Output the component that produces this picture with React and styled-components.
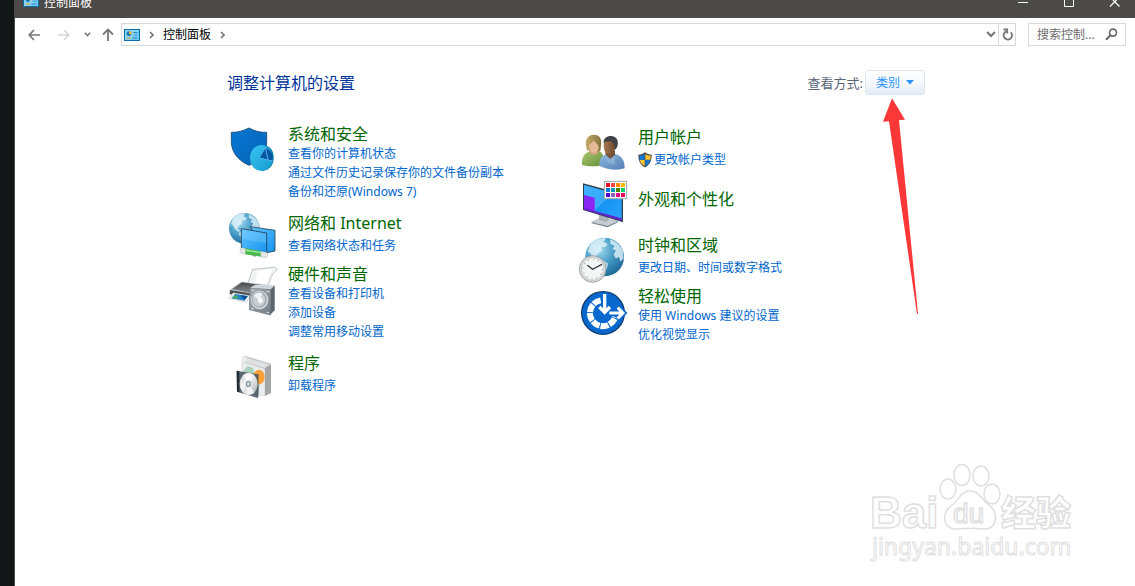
import React from 'react';
import styled, { createGlobalStyle } from 'styled-components';

const App = () => {
  return (
    <Desktop>
      <GlobalStyle />
      <WindowEl>
        <TitleBar>
          <PanelIcon />
          <TitleText>控制面板</TitleText>
          <WindowControls />
        </TitleBar>
        <Toolbar />
        <Main>
          <Content>
            <HeaderRow>
              <PageTitle>调整计算机的设置</PageTitle>
              <ViewLabel htmlFor='view-by'>查看方式:</ViewLabel>
              <ViewBy />
            </HeaderRow>
            <Columns>
              {columns.map((items, index) => (
                <Column key={index}>
                  {items.map(item => (
                    <Category key={item.title} {...item} />
                  ))}
                </Column>
              ))}
            </Columns>
          </Content>
        </Main>
      </WindowEl>
      <Watermark />
    </Desktop>
  );
};

const Category = ({ title, icon: Icon, links, shield }) => (
  <CategoryEl $long={links.length > 1}>
    <Icon />
    <CategoryText $links={links.length}>
      <CategoryTitle href='#'>{title}</CategoryTitle>
      {links.map(link => (
        <TaskLink key={link} href='#'>
          {shield && <ShieldBadge />}
          {link}
        </TaskLink>
      ))}
    </CategoryText>
  </CategoryEl>
);

const WindowControls = () => (
  <ControlsEl>
    <PlainButton aria-label='最小化'>
      <svg width='11' height='11' stroke='#fff'>
        <path d='M1 6.5h10' />
      </svg>
    </PlainButton>
    <PlainButton aria-label='最大化'>
      <svg width='11' height='11' stroke='#fff' fill='none'>
        <path d='M1.5 1.5h9v9h-9z' />
      </svg>
    </PlainButton>
    <PlainButton aria-label='关闭'>
      <svg width='11' height='11' stroke='#fff' strokeWidth='1.2'>
        <path d='M1 1l9.500 9.500M10.500 1L1 10.500' />
      </svg>
    </PlainButton>
  </ControlsEl>
);

const Toolbar = () => (
  <ToolbarEl>
    <NavButton aria-label='后退' $width={30}>
      <svg width='12' height='12' fill='none' stroke='#777' strokeWidth='1.7'>
        <path d='M12 6H1.500M6 1L1.200 6L6 11' />
      </svg>
    </NavButton>
    <NavButton aria-label='前进' $width={30}>
      <svg width='12' height='12' fill='none' stroke='#d6d6d6' strokeWidth='1.7'>
        <path d='M0 6H10.500M6 1L10.800 6L6 11' />
      </svg>
    </NavButton>
    <NavButton aria-label='最近浏览的位置' $width={16}>
      <svg width='7' height='5' fill='none' stroke='#777' strokeWidth='1.6'>
        <path d='M.8 .8L3.500 3.500L6.200 .8' />
      </svg>
    </NavButton>
    <NavButton aria-label='上移' $width={26}>
      <svg width='12' height='13' fill='none' stroke='#777' strokeWidth='1.8'>
        <path d='M6 13V1.500M1 6.500L6 1.500L11 6.500' />
      </svg>
    </NavButton>
    <AddressBar>
      <Crumbs>
        <PanelIcon />
        <CrumbChevron />
        <Crumb>控制面板</Crumb>
        <CrumbChevron />
      </Crumbs>
      <NavButton aria-label='历史记录' $width={14}>
        <svg width='10' height='7' fill='none' stroke='#777' strokeWidth='2'>
          <path d='M1 1L5 5L9 1' />
        </svg>
      </NavButton>
      <RefreshButton aria-label='刷新' $width={17}>
        <svg width='11' height='13' fill='none' stroke='#777' strokeWidth='1.8'>
          <path d='M8.800 4.300A4.200 4.200 0 1 1 4.500 3.300' />
          <path d='M1.500 1.500H5.200V5.500' />
        </svg>
      </RefreshButton>
    </AddressBar>
    <SearchBox>
      <input type='text' aria-label='搜索控制面板' placeholder='搜索控制...' />
      <svg width='13' height='13' fill='none' stroke='#666'>
        <circle cx='8' cy='4.600' r='3.500' strokeWidth='1.600' />
        <path d='M5.500 7.200L1 11.700' strokeWidth='2' />
      </svg>
    </SearchBox>
  </ToolbarEl>
);

const CrumbChevron = () => (
  <svg width='5' height='8' fill='none' stroke='#777' strokeWidth='1.6'>
    <path d='M1 1L4 4L1 7' />
  </svg>
);

const ViewBy = () => (
  <ViewByEl>
    <ViewSelect id='view-by' defaultValue='category'>
      <option value='category'>类别</option>
      <option value='large'>大图标</option>
      <option value='small'>小图标</option>
    </ViewSelect>
    <Caret width='8' height='5'>
      <path d='M0 0H8L4 4.500Z' fill='#2a94ff' />
    </Caret>
    <Pointer width='45' height='220' viewBox='30 15 135 660'>
      <path d='M66 25L105 89L87 90L144 672H141L57 94L39 95Z' fill='#fc3737' />
    </Pointer>
  </ViewByEl>
);

const PanelIcon = () => (
  <svg width='16' height='12' viewBox='0 0 48 36'>
    <rect width='48' height='36' fill='#0b6ea8' />
    <rect x='3' y='3' width='42' height='30' fill='#6fc8f5' />
    <path d='M3 3H45L24 33H3Z' fill='#9adbfb' opacity='0.6' />
    <circle cx='15' cy='14' r='7' fill='#1274c0' />
    <path d='M15 14V6A8 8 0 0 1 22 17Z' fill='#ffb52e' />
    <path d='M28 10H40V12H28ZM28 17H40V19H28Z' fill='#126ba8' />
    <path d='M8 27H20' stroke='#f09a16' strokeWidth='3' />
    <path d='M24 27H40' stroke='#126ba8' strokeWidth='2' />
  </svg>
);

const ShieldBadge = () => (
  <svg width='14' height='16' viewBox='0 0 42 48'>
    <path
      d='M21 1C15 6 9 8 1 8C1 27 7 39 21 46C35 39 41 27 41 8C33 8 27 6 21 1Z'
      fill='#45474a'
    />
    <path d='M20 6C15 9 10 11 4 11L5 23H20Z' fill='#1379d3' />
    <path d='M22 6C27 9 32 11 38 11L37 23H22Z' fill='#ffc431' />
    <path d='M5 24H20V42C11 37 7 32 5 24Z' fill='#ffc431' />
    <path d='M37 24H22V42C31 37 35 32 37 24Z' fill='#1379d3' />
  </svg>
);

const SecurityIcon = () => (
  <IconEl viewBox='24 36 144 144'>
    <defs>
      <linearGradient id='shield' x2='1' y2='1'>
        <stop offset='0' stopColor='#0878d5' />
        <stop offset='1' stopColor='#0562b5' />
      </linearGradient>
      <linearGradient id='pie' x2='1' y2='1'>
        <stop offset='0' stopColor='#38c5f2' />
        <stop offset='1' stopColor='#159bd0' />
      </linearGradient>
    </defs>
    <path
      d='M34 52C54 53 70 47 87 39C104 48 120 53 140 52V83C137 119 115 141 87 151C55 137 34 111 34 80Z'
      fill='url(#shield)'
      stroke='#17466f'
      strokeWidth='2.5'
    />
    <path d='M128 90C151 92 163 108 161 132C159 155 146 166 125 168Z' fill='#0b7fae' />
    <ellipse cx='124' cy='129' rx='34' ry='39' fill='url(#pie)' />
    <path d='M136 99L117 128L158 137C161 119 153 105 136 99Z' fill='#0756a4' />
    <path d='M136 98L117 129L158 138M136 98L144 134' fill='none' stroke='#51b6e8' strokeWidth='3' />
  </IconEl>
);

// shared by the network and the region icon
const Globe = ({ id, cx, cy, r }) => (
  <g transform={`translate(${cx} ${cy}) scale(${r / 50})`}>
    <defs>
      <radialGradient id={id} cx='0.35' cy='0.3' r='0.75'>
        <stop offset='0' stopColor='#a9dcf0' />
        <stop offset='0.5' stopColor='#4a9fc9' />
        <stop offset='1' stopColor='#1d6797' />
      </radialGradient>
    </defs>
    <circle r='50' fill={`url(#${id})`} />
    <path
      d='M-38-30C-30-44-12-49 3-49L-3-39L8-33L0-25L-9-26L-7-16L-19-8L-23 1L-14 7L-18 12L-30 3L-37-10L-44-14Z'
      fill='#e4f3f9'
      opacity='0.8'
    />
    <path
      d='M-16 12L-5 8L9 17L6 29L-4 45L-12 40L-11 28L-19 20Z'
      fill='#dbeff7'
      opacity='0.7'
    />
    <path
      d='M14-46C28-42 42-30 47-16L49 3L41 12L37 0L29 4L23-6L29-17L20-20L25-29L15-34Z'
      fill='#e4f3f9'
      opacity='0.8'
    />
  </g>
);

const NetworkIcon = () => (
  <IconEl viewBox='24 39 144 144'>
    <defs>
      <linearGradient id='screen' x2='1' y2='1'>
        <stop offset='0' stopColor='#62c5ff' />
        <stop offset='1' stopColor='#1593f0' />
      </linearGradient>
    </defs>
    <Globe id='globe-net' cx={73} cy={85} r={46} />
    <path d='M91 80L165 91V153L140 158Z' fill='url(#screen)' stroke='#263f50' strokeWidth='2.5' />
    <path d='M64 86L140 99V160L64 144Z' fill='url(#screen)' stroke='#263f50' strokeWidth='2.5' />
    <path d='M66 88L138 101V130L66 116Z' fill='#84d2ff' opacity='0.35' />
    <path d='M98 152V168L107 170V152Z' fill='#889' />
    <path d='M64 143L78 145V163L63 160C58 156 59 146 64 143Z' fill='#e4e8e4' stroke='#959b96' />
    <path d='M76 145L123 153V170L76 163Z' fill='#49b84e' />
    <path d='M77 148L122 156V160L77 153Z' fill='#a3ec9a' />
    <path d='M122 154L140 157C145 161 144 171 138 173L122 171Z' fill='#e4e8e4' stroke='#959b96' />
  </IconEl>
);

const HardwareIcon = () => (
  <IconEl viewBox='24 201 144 144'>
    <defs>
      <linearGradient id='metal' x2='1' y2='1'>
        <stop offset='0' stopColor='#a5adb3' />
        <stop offset='1' stopColor='#737d84' />
      </linearGradient>
      <linearGradient id='printer' x2='0' y2='1'>
        <stop offset='0' stopColor='#44494b' />
        <stop offset='1' stopColor='#8b8f91' />
      </linearGradient>
    </defs>
    <path d='M98 208L160 202C167 202 172 205 171 210C157 218 152 235 144 260L83 251Z' fill='#f0f2f4' stroke='#a7abad' strokeWidth='2' />
    <path d='M112 213L160 206C150 218 144 237 139 252L105 248Z' fill='#fff' />
    <path d='M30 269L63 245L146 255L148 275L92 294L29 284Z' fill='#c6c9cb' />
    <path d='M36 267L66 247L139 257L105 281Z' fill='url(#printer)' />
    <path d='M30 270L103 282V293L29 282Z' fill='#4a4f52' />
    <path d='M39 278L94 287L79 306L27 296Z' fill='#eef0f0' stroke='#969b9d' />
    <path d='M45 282L84 288L73 302L35 295Z' fill='#2483c7' />
    <path d='M45 284L58 295L36 295Z' fill='#4aad5d' />
    <path d='M61 286L74 300L83 289Z' fill='#0d4f94' />
    <path d='M152 267L164 256V331L150 345Z' fill='#5b656c' />
    <path d='M90 264L152 267L151 345L88 329Z' fill='url(#metal)' stroke='#6b757b' strokeWidth='2' />
    <path d='M152 267L164 256L105 254L90 264Z' fill='#d0d6d9' />
    <ellipse cx='119' cy='300' rx='26' ry='28' fill='#d4dade' />
    <ellipse cx='118' cy='299' rx='22' ry='24' fill='#98a2a8' />
    <ellipse cx='117' cy='299' rx='19' ry='21' fill='#c7cfd3' />
    <path d='M117 299L101 288C107 277 119 275 128 281Z' fill='#eef1f2' />
    <ellipse cx='121' cy='301' rx='7' ry='9' fill='#f6f8f8' />
    <path d='M96 271L103 271M140 275H147M94 325L101 327M140 337L147 338' stroke='#d6dadd' strokeWidth='4' />
  </IconEl>
);

const ProgramsIcon = () => (
  <IconEl viewBox='24 39 144 144'>
    <defs>
      <linearGradient id='disc' x2='1' y2='1'>
        <stop offset='0' stopColor='#c3c6c8' />
        <stop offset='0.4' stopColor='#f7f7f7' />
        <stop offset='1' stopColor='#a6abad' />
      </linearGradient>
    </defs>
    <path d='M66 64L135 82V168L66 158Z' fill='#eaebec' stroke='#b8babc' />
    <path d='M135 82L153 74V159L135 168Z' fill='#a3a5a7' />
    <path d='M66 64L73 48L153 72L135 86Z' fill='#c9cbcc' stroke='#999c9e' />
    <path d='M73 49L82 53L80 66L66 66Z' fill='#eff0f0' />
    <path d='M81 54L149 74L133 83L74 66Z' fill='#dfe1e2' />
    <path d='M66 98L83 78L99 84L105 106L121 119L115 163L66 150Z' fill='#a9d0b8' />
    <ellipse cx='117' cy='111' rx='17' ry='22' fill='#faa13a' />
    <path d='M50 92L112 103V174L51 155Z' fill='#5b6872' />
    <path d='M50 92L58 94V157L51 155Z' fill='#222c34' />
    <path d='M112 103L115 102V172L112 174Z' fill='#26343f' />
    <ellipse cx='86' cy='132' rx='27' ry='33' fill='url(#disc)' />
    <path d='M85 132L69 106C76 99 86 98 95 103ZM86 133L103 157C97 165 86 167 78 161Z' fill='#fff' opacity='0.7' />
    <ellipse cx='85' cy='132' rx='8' ry='10' fill='#8d9da2' />
    <ellipse cx='85' cy='132' rx='4' ry='5' fill='#d9e2e4' />
  </IconEl>
);

const UsersIcon = () => (
  <IconEl viewBox='24 21 144 144'>
    <defs>
      <linearGradient id='green' x2='1' y2='1'>
        <stop offset='0' stopColor='#a9c76d' />
        <stop offset='1' stopColor='#66903c' />
      </linearGradient>
      <linearGradient id='blue' x2='1' y2='1'>
        <stop offset='0' stopColor='#8db8df' />
        <stop offset='1' stopColor='#5580b4' />
      </linearGradient>
      <linearGradient id='hair' x2='1' y2='0'>
        <stop offset='0' stopColor='#c4ac68' />
        <stop offset='1' stopColor='#85733e' />
      </linearGradient>
      <linearGradient id='face' x2='1' y2='0'>
        <stop offset='0' stopColor='#a87850' />
        <stop offset='1' stopColor='#6f4a30' />
      </linearGradient>
    </defs>
    <path d='M36 135C35 110 43 100 61 94L86 93C98 97 104 111 102 134C79 141 55 140 36 135Z' fill='url(#green)' />
    <path d='M58 87H82L85 99L73 106L58 98Z' fill='#d6a280' />
    <path d='M48 78C45 56 55 44 72 44C89 44 97 57 93 78L91 93L80 95L58 92L51 91Z' fill='url(#hair)' />
    <path d='M57 74C62 71 68 68 71 61C74 68 84 72 86 80C86 93 79 98 71 98C63 97 57 90 57 74Z' fill='#e7ba97' />
    <path d='M88 133C88 115 96 107 111 103L136 102C154 107 164 120 164 145C140 153 111 148 88 138Z' fill='url(#blue)' />
    <path d='M107 91H135V105L121 117L106 103Z' fill='#765038' />
    <path d='M101 69C100 53 112 47 125 48C142 50 146 63 142 80L136 89L104 73Z' fill='#3f4245' />
    <path d='M101 72C104 65 110 62 120 64C129 66 134 73 134 82C132 97 126 105 116 104C106 102 100 88 101 72Z' fill='url(#face)' />
    <path d='M104 106L119 118L135 106L134 134L114 129Z' fill='#93b9dc' opacity='0.6' />
  </IconEl>
);

const swatches = [
  '#e81123', '#ff4343', '#ff8c00', '#ffb900',
  '#0078d7', '#0099bc', '#498205', '#00cc6a',
  '#5400c8', '#8764b8', '#e3008c', '#ea005e'
];

const AppearanceIcon = () => (
  <IconEl viewBox='24 183 144 144'>
    <defs>
      <linearGradient id='sky' x2='1' y2='1'>
        <stop offset='0' stopColor='#41b1ff' />
        <stop offset='0.5' stopColor='#36a9fb' />
        <stop offset='0.51' stopColor='#1593f1' />
        <stop offset='1' stopColor='#2aa5ff' />
      </linearGradient>
      <linearGradient id='violet' x2='1' y2='1'>
        <stop offset='0' stopColor='#7a2ff0' />
        <stop offset='1' stopColor='#9a1ff5' />
      </linearGradient>
    </defs>
    <path d='M65 306L94 292L144 303L113 318Z' fill='#c6ced3' stroke='#87939a' />
    <path d='M65 307L113 318L144 304V307L113 322L65 310Z' fill='#74818a' />
    <path d='M87 280L116 287V302L105 306L87 300Z' fill='#a8b2b8' />
    <path d='M39 190L159 222V307L39 270Z' fill='#31414c' />
    <path d='M42 195L155 226V300L42 267Z' fill='url(#sky)' />
    <path d='M42 225L74 233V275L42 266Z' fill='url(#violet)' />
    <path d='M42 264L155 295V302L42 269Z' fill='#6423ce' />
    <rect x='103' y='184' width='67' height='52' fill='#fff' stroke='#a1a5a7' strokeWidth='3' />
    {swatches.map((color, index) => (
      <rect
        key={color}
        x={108 + (index % 4) * 15}
        y={189 + Math.floor(index / 4) * 15}
        width='12'
        height='12'
        fill={color}
      />
    ))}
  </IconEl>
);

const ClockIcon = () => (
  <IconEl viewBox='24 15 144 144'>
    <Globe id='globe-clock' cx={104} cy={81} r={58} />
    <circle cx='68' cy='117' r='40' fill='#d9dcde' stroke='#84898c' strokeWidth='2' />
    <circle cx='68' cy='117' r='34' fill='#f4f5f5' stroke='#b0b5b8' strokeWidth='2' />
    <circle
      cx='68'
      cy='117'
      r='29'
      fill='none'
      stroke='#a4aaae'
      strokeWidth='4'
      strokeDasharray='3 12.180'
    />
    <path d='M52 106L68 118L96 103' fill='none' stroke='#292d30' strokeWidth='3.500' />
  </IconEl>
);

const EaseIcon = () => (
  <IconEl viewBox='24 177 144 144'>
    <circle cx='99' cy='249' r='64' fill='#0868ce' stroke='#103e74' strokeWidth='4' />
    <path
      d='M92 211A39 39 0 1 0 136 261'
      fill='none'
      stroke='#fff'
      strokeWidth='18'
      strokeDasharray='24 3'
    />
    <path
      d='M104 194V250M87 233L104 250L121 233M116 249H158M143 231L161 249L143 267'
      fill='none'
      stroke='#0868ce'
      strokeWidth='16'
    />
    <path d='M104 192V246M88 231L104 247L120 231' fill='none' stroke='#fff' strokeWidth='10' />
    <path d='M118 249H156M143 233L159 249L143 265' fill='none' stroke='#fff' strokeWidth='9' />
  </IconEl>
);

const Watermark = () => (
  <WatermarkEl width='220' height='110' viewBox='0 0 220 110'>
    <g fill='#fff' stroke='#dfdfdf' strokeWidth='1.500'>
      <text x='0' y='68' fontSize='44' fontWeight='700' fontFamily='Liberation Sans'>
        Bai
      </text>
      <ellipse cx='78' cy='29' rx='8' ry='10' />
      <ellipse cx='92' cy='15' rx='8' ry='10.500' />
      <ellipse cx='111' cy='16' rx='8' ry='10' />
      <ellipse cx='122' cy='34' rx='8' ry='10' />
      <path d='M100 31C90 31 89 41 81 46C71 53 72 70 88 69C96 68 105 68 113 69C127 70 129 54 120 46C111 40 110 31 100 31Z' />
      <text x='83' y='63' fontSize='28' fontFamily='Liberation Sans'>
        du
      </text>
      <text x='131' y='66' fontSize='35' fontWeight='900' fontFamily='Noto Sans CJK SC'>
        经验
      </text>
      <text x='2' y='95' fontSize='23' fontFamily='Noto Sans' strokeWidth='1'>
        jingyan.baidu.com
      </text>
    </g>
  </WatermarkEl>
);

const columns = [
  [
    {
      title: '系统和安全',
      icon: SecurityIcon,
      links: [
        '查看你的计算机状态',
        '通过文件历史记录保存你的文件备份副本',
        '备份和还原(Windows 7)'
      ]
    },
    { title: '网络和 Internet', icon: NetworkIcon, links: ['查看网络状态和任务'] },
    {
      title: '硬件和声音',
      icon: HardwareIcon,
      links: ['查看设备和打印机', '添加设备', '调整常用移动设置']
    },
    { title: '程序', icon: ProgramsIcon, links: ['卸载程序'] }
  ],
  [
    { title: '用户帐户', icon: UsersIcon, links: ['更改帐户类型'], shield: true },
    { title: '外观和个性化', icon: AppearanceIcon, links: [] },
    { title: '时钟和区域', icon: ClockIcon, links: ['更改日期、时间或数字格式'] },
    {
      title: '轻松使用',
      icon: EaseIcon,
      links: ['使用 Windows 建议的设置', '优化视觉显示']
    }
  ]
];

const GlobalStyle = createGlobalStyle`
  * {
    box-sizing: border-box;
  }
  body {
    margin: 0;
    font-family: 'Noto Sans', 'Noto Sans CJK SC', sans-serif;
    font-size: 12px;
    line-height: 16px;
  }
  button, input, select {
    font: inherit;
  }
  svg {
    flex: none;
  }
`;

const Desktop = styled.div`
  position: relative;
  display: flex;
  min-height: 100vh;
  padding-left: 14px;
  overflow: hidden;
  background: #121616;
`;

const WindowEl = styled.div`
  flex: 1;
  min-width: 0;
  border-left: 1px solid #4c4a48;
  background: #ffffff;
`;

const TitleBar = styled.header`
  display: flex;
  align-items: flex-end;
  height: 18px;
  padding: 0 15px 11px 8px;
  overflow: hidden;
  background: #4c4a48;
  color: #ffffff;
`;

const TitleText = styled.span`
  flex: 1;
  margin: 0 0 -4px 5px;
`;

const ControlsEl = styled.div`
  display: flex;
  gap: 35px;
`;

const PlainButton = styled.button`
  display: flex;
  align-items: center;
  justify-content: center;
  padding: 0;
  border: 0;
  background: none;
`;

const ToolbarEl = styled.nav`
  display: flex;
  padding: 5px 9px 5px 4px;
`;

const NavButton = styled(PlainButton)`
  width: ${props => props.$width}px;
`;

const RefreshButton = styled(NavButton)`
  border-left: 1px solid #d9d9d9;
`;

const AddressBar = styled.div`
  display: flex;
  flex: 1;
  height: 23px;
  border: 1px solid #d9d9d9;
`;

const Crumbs = styled.div`
  display: flex;
  flex: 1;
  align-items: center;
  gap: 9px;
  padding-left: 2px;
`;

const Crumb = styled(PlainButton)`
  color: #000000;
`;

const SearchBox = styled.div`
  display: flex;
  align-items: center;
  width: 98px;
  margin-left: 12px;
  padding: 0 7px 0 8px;
  border: 1px solid #d9d9d9;

  input {
    flex: 1;
    min-width: 0;
    padding: 0;
    border: 0;
    outline: 0;
  }
  input::placeholder {
    color: #6d6d6d;
  }
`;

const Main = styled.main`
  padding-top: 19px;
`;

const Content = styled.div`
  max-width: 700px;
  margin: 0 auto;
`;

const HeaderRow = styled.div`
  display: flex;
  align-items: center;
  height: 25px;
  padding-left: 2px;
`;

const PageTitle = styled.h1`
  flex: 1;
  margin: 0;
  font-size: 16px;
  font-weight: 400;
  line-height: 20px;
  color: #003399;
`;

const ViewLabel = styled.label`
  margin-right: 2px;
  font-size: 13px;
  color: #5a6478;
`;

const ViewByEl = styled.div`
  position: relative;
`;

const ViewSelect = styled.select`
  display: block;
  width: 60px;
  height: 25px;
  padding: 0 10px;
  appearance: none;
  border: 1px solid #dde5f0;
  border-radius: 3px;
  background: linear-gradient(#ffffff 0%, #f5f8fc 50%, #e5ecf7 100%);
  color: #2a94ff;
`;

const Caret = styled.svg`
  position: absolute;
  top: 10px;
  right: 11px;
  pointer-events: none;
`;

const Pointer = styled.svg`
  position: absolute;
  top: 100%;
  left: 15px;
  pointer-events: none;
`;

const Columns = styled.div`
  display: grid;
  grid-template-columns: 1fr 1fr;
  margin-top: 29px;
`;

const Column = styled.div`
  display: flex;
  flex-direction: column;
  gap: 6px;
`;

const CategoryEl = styled.section`
  display: flex;
  gap: 12px;
  min-height: 48px;
  padding: 0 0 ${props => (props.$long ? 3 : 0)}px 3px;
`;

const IconEl = styled.svg`
  width: 48px;
  height: 48px;
  margin: 3px 0 -3px;
  overflow: visible;
`;

const CategoryText = styled.div`
  display: flex;
  flex-direction: column;
  align-items: flex-start;
  justify-content: center;
  gap: ${props => (props.$links === 1 ? 3 : 0)}px;
  padding-bottom: ${props => (props.$links === 0 ? 6 : 0)}px;
`;

const CategoryTitle = styled.a`
  font-size: 16px;
  line-height: 20px;
  color: #006600;
  text-decoration: none;
`;

const TaskLink = styled.a`
  display: flex;
  align-items: center;
  gap: 2px;
  line-height: 19px;
  color: #0066cc;
  text-decoration: none;

  &:hover {
    text-decoration: underline;
  }
`;

const WatermarkEl = styled.svg`
  position: absolute;
  right: 45px;
  bottom: 16px;
  pointer-events: none;
`;

export default App;
